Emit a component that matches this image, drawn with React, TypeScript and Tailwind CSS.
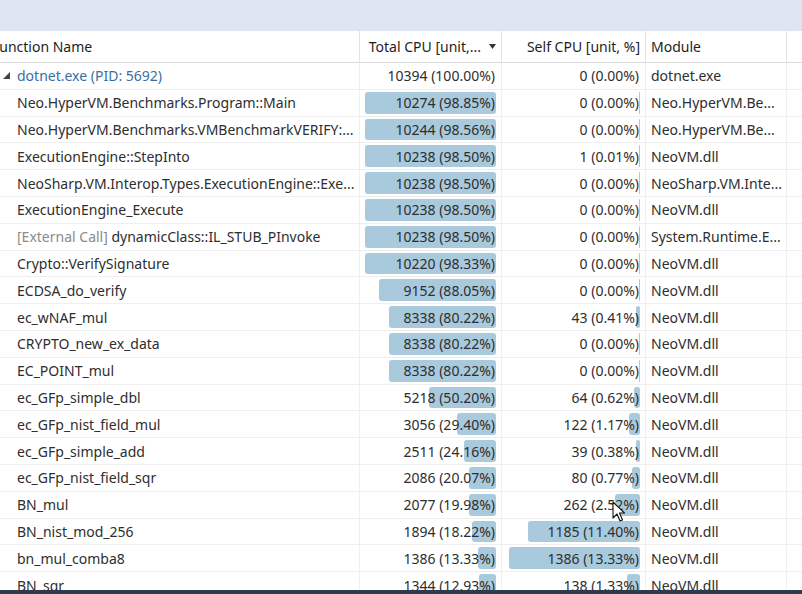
import React from "react";

type Row = {
  name: string;
  prefix?: string;
  total: number;
  totalPct: string;
  self: number;
  selfPct: string;
  module: string;
  root?: boolean;
};

const rows: Row[] = [
  { name: "dotnet.exe (PID: 5692)", total: 10394, totalPct: "100.00", self: 0, selfPct: "0.00", module: "dotnet.exe", root: true },
  { name: "Neo.HyperVM.Benchmarks.Program::Main", total: 10274, totalPct: "98.85", self: 0, selfPct: "0.00", module: "Neo.HyperVM.Be..." },
  { name: "Neo.HyperVM.Benchmarks.VMBenchmarkVERIFY:...", total: 10244, totalPct: "98.56", self: 0, selfPct: "0.00", module: "Neo.HyperVM.Be..." },
  { name: "ExecutionEngine::StepInto", total: 10238, totalPct: "98.50", self: 1, selfPct: "0.01", module: "NeoVM.dll" },
  { name: "NeoSharp.VM.Interop.Types.ExecutionEngine::Exe...", total: 10238, totalPct: "98.50", self: 0, selfPct: "0.00", module: "NeoSharp.VM.Inte..." },
  { name: "ExecutionEngine_Execute", total: 10238, totalPct: "98.50", self: 0, selfPct: "0.00", module: "NeoVM.dll" },
  { prefix: "[External Call]", name: "dynamicClass::IL_STUB_PInvoke", total: 10238, totalPct: "98.50", self: 0, selfPct: "0.00", module: "System.Runtime.E..." },
  { name: "Crypto::VerifySignature", total: 10220, totalPct: "98.33", self: 0, selfPct: "0.00", module: "NeoVM.dll" },
  { name: "ECDSA_do_verify", total: 9152, totalPct: "88.05", self: 0, selfPct: "0.00", module: "NeoVM.dll" },
  { name: "ec_wNAF_mul", total: 8338, totalPct: "80.22", self: 43, selfPct: "0.41", module: "NeoVM.dll" },
  { name: "CRYPTO_new_ex_data", total: 8338, totalPct: "80.22", self: 0, selfPct: "0.00", module: "NeoVM.dll" },
  { name: "EC_POINT_mul", total: 8338, totalPct: "80.22", self: 0, selfPct: "0.00", module: "NeoVM.dll" },
  { name: "ec_GFp_simple_dbl", total: 5218, totalPct: "50.20", self: 64, selfPct: "0.62", module: "NeoVM.dll" },
  { name: "ec_GFp_nist_field_mul", total: 3056, totalPct: "29.40", self: 122, selfPct: "1.17", module: "NeoVM.dll" },
  { name: "ec_GFp_simple_add", total: 2511, totalPct: "24.16", self: 39, selfPct: "0.38", module: "NeoVM.dll" },
  { name: "ec_GFp_nist_field_sqr", total: 2086, totalPct: "20.07", self: 80, selfPct: "0.77", module: "NeoVM.dll" },
  { name: "BN_mul", total: 2077, totalPct: "19.98", self: 262, selfPct: "2.52", module: "NeoVM.dll" },
  { name: "BN_nist_mod_256", total: 1894, totalPct: "18.22", self: 1185, selfPct: "11.40", module: "NeoVM.dll" },
  { name: "bn_mul_comba8", total: 1386, totalPct: "13.33", self: 1386, selfPct: "13.33", module: "NeoVM.dll" },
  { name: "BN_sqr", total: 1344, totalPct: "12.93", self: 138, selfPct: "1.33", module: "NeoVM.dll" },
];

const FONT = { fontFamily: '"Noto Sans", "Open Sans", sans-serif' };

const BarCell = ({ width, text, show }: { width: number; text: string; show: boolean }) => (
  <div className="relative h-full flex items-center justify-end pr-[6px] border-r border-[#efefef]">
    {show && (
      <div
        className="absolute right-[5px] top-[2px] bottom-[2px] rounded-[3px] bg-[#a9c9dc]"
        style={{ width: Math.max(width, 1.5) }}
      />
    )}
    <span className="relative">{text}</span>
  </div>
);

const Cursor = () => (
  <svg className="absolute left-[612px] top-[501px]" width="14" height="22" viewBox="0 0 14 22">
    <path d="M1 1 L1 17 L5 13 L8 20 L10.5 19 L7.5 12 L12.5 12 Z" fill="#fff" stroke="#111" strokeWidth="1.1" strokeLinejoin="round" />
  </svg>
);

export default function App() {
  return (
    <div className="relative w-[802px] h-[594px] overflow-hidden bg-white flex flex-col text-[14px] text-[#2e2e2e]" style={FONT}>
      {/* toolbar band */}
      <div className="h-[31px] bg-[#dfe6f1] shrink-0" />

      {/* header */}
      <div className="h-[32px] shrink-0 grid grid-cols-[360px_142px_144px_141px_15px] border-b border-[#dcdcdc] text-[#1e1e1e]">
        <div className="flex items-center overflow-hidden border-r border-[#e3e3e3]">
          <span className="-ml-[8px] whitespace-nowrap">Function Name</span>
        </div>
        <div className="flex items-center justify-end pr-[5px] border-r border-[#e3e3e3] whitespace-nowrap">
          <span>Total CPU [unit,...</span>
          <svg className="ml-[8px]" width="7" height="5" viewBox="0 0 7 5">
            <path d="M0 0 L7 0 L3.5 5 Z" fill="#333" />
          </svg>
        </div>
        <div className="flex items-center justify-end pr-[5px] border-r border-[#e3e3e3] whitespace-nowrap">Self CPU [unit, %]</div>
        <div className="flex items-center pl-[5px] border-r border-[#e3e3e3]">Module</div>
        <div />
      </div>

      {/* body */}
      <div className="flex-1 overflow-hidden">
        {rows.map((r) => (
          <div key={r.name} className="h-[26.8px] grid grid-cols-[360px_142px_144px_141px_15px] border-b border-[#efefef] whitespace-nowrap">
            <div className="flex items-center overflow-hidden border-r border-[#efefef]">
              {r.root ? (
                <>
                  <svg className="ml-[3px] mr-[7px]" width="7" height="7" viewBox="0 0 7 7">
                    <path d="M7 0 L7 7 L0 7 Z" fill="#444" />
                  </svg>
                  <span className="text-[#3a6ea5]">{r.name}</span>
                </>
              ) : (
                <span className="pl-[17px]">
                  {r.prefix && <span className="text-[#8a8a8a]">{r.prefix} </span>}
                  {r.name}
                </span>
              )}
            </div>
            <BarCell width={(parseFloat(r.totalPct) / 100) * 133} text={`${r.total} (${r.totalPct}%)`} show={!r.root} />
            <BarCell width={(parseFloat(r.selfPct) / 13.33) * 131} text={`${r.self} (${r.selfPct}%)`} show={!r.root} />
            <div className="flex items-center pl-[5px] border-r border-[#efefef] overflow-hidden">{r.module}</div>
            <div />
          </div>
        ))}
      </div>

      {/* bottom status strip */}
      <div className="h-[4px] shrink-0 bg-[#2f3b4d]" />

      <Cursor />
    </div>
  );
}
